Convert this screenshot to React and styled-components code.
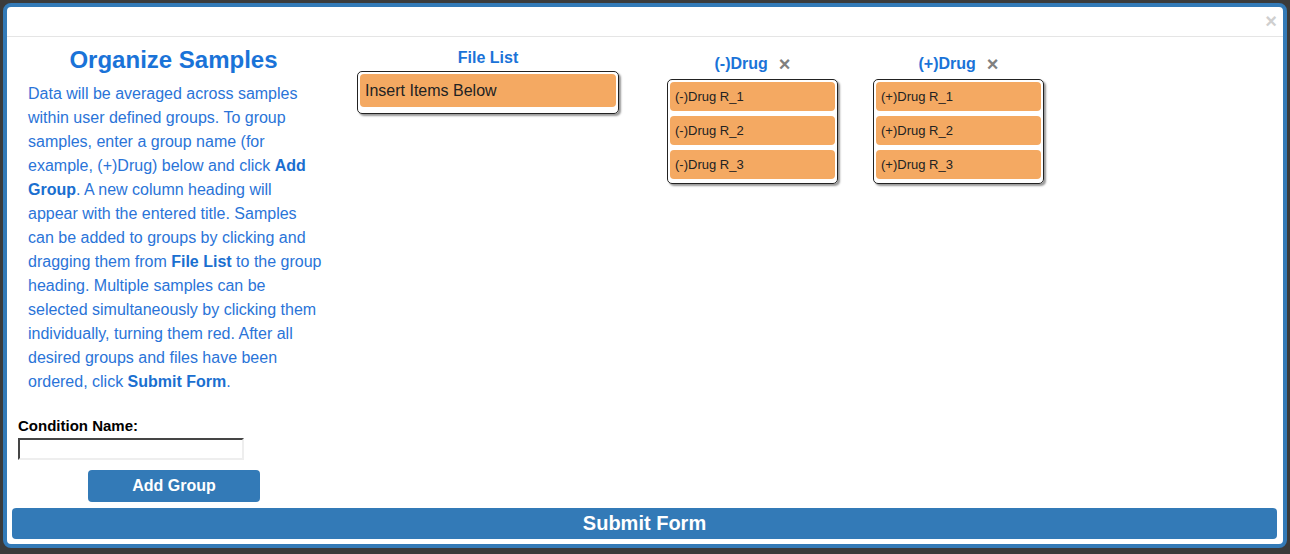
import React from "react";
import styled, { createGlobalStyle } from "styled-components";

const Global = createGlobalStyle`
  html, body {
    margin: 0;
    padding: 0;
    background: #3b3b3b;
    font-family: "Liberation Sans", Arial, sans-serif;
  }
`;

const Page = styled.div`
  padding: 3px 3px 6px 3px;
  height: 554px;
  box-sizing: border-box;
`;

const Modal = styled.div`
  height: 100%;
  box-sizing: border-box;
  border: 4px solid #337ab7;
  border-radius: 8px;
  background: #fff;
  display: flex;
  flex-direction: column;
`;

const Header = styled.div`
  height: 29px;
  border-bottom: 1px solid #e5e5e5;
  display: flex;
  justify-content: flex-end;
  align-items: center;
  padding-right: 6px;
`;

const Close = styled.span`
  font-size: 20px;
  font-weight: bold;
  line-height: 1;
  color: ${(p) => p.$color || "#cfcfcf"};
  cursor: pointer;
  margin-top: ${(p) => (p.$top ? "-2px" : "0")};
`;

const Main = styled.div`
  display: flex;
  align-items: flex-start;
`;

const Side = styled.div`
  width: 333px;
  display: flex;
  flex-direction: column;
  padding-top: 10px;
`;

const Title = styled.h2`
  margin: 0;
  font-size: 24px;
  line-height: 26px;
  font-weight: bold;
  color: #1a73d8;
  text-align: center;
`;

const Help = styled.p`
  margin: 9px 0 0 21px;
  width: 295px;
  font-size: 16px;
  line-height: 24px;
  color: #2a74d8;
  b {
    color: #1a6fd0;
  }
`;

const Label = styled.label`
  margin: 24px 0 0 11px;
  font-size: 15px;
  line-height: 16px;
  font-weight: bold;
  color: #000;
`;

const Input = styled.input`
  margin: 4px 0 0 11px;
  width: 226px;
  height: 22px;
  box-sizing: border-box;
  border: 2px inset #eee;
  border-top-color: #999;
  border-left-color: #999;
  padding: 0 3px;
`;

const Button = styled.button`
  background: #337ab7;
  color: #fff;
  border: none;
  border-radius: 4px;
  font-family: inherit;
  font-weight: bold;
  cursor: pointer;
`;

const AddButton = styled(Button)`
  margin: 10px 0 0 81px;
  width: 172px;
  height: 32px;
  font-size: 16px;
`;

const SubmitButton = styled(Button)`
  margin: 6px 6px 0 5px;
  height: 31px;
  font-size: 20px;
`;

const Column = styled.div`
  width: ${(p) => p.$width}px;
  margin-left: ${(p) => p.$gap}px;
  padding-top: ${(p) => p.$top}px;
  display: flex;
  flex-direction: column;
`;

const ColHead = styled.div`
  display: flex;
  justify-content: center;
  align-items: center;
  gap: 11px;
  height: 18px;
  margin-bottom: ${(p) => p.$gap}px;
`;

const ColTitle = styled.span`
  font-size: 16px;
  font-weight: bold;
  color: #1a73d8;
`;

const List = styled.div`
  border: 1px solid #222;
  border-radius: 5px;
  box-shadow: 2px 2px 2px #999;
  padding: 2px 2px ${(p) => p.$bottom}px 2px;
  display: flex;
  flex-direction: column;
  gap: 5px;
`;

const Item = styled.div`
  background: #f4a962;
  border-radius: 4px;
  height: ${(p) => (p.$big ? 33 : 29)}px;
  display: flex;
  align-items: center;
  padding-left: 5px;
  font-size: ${(p) => (p.$big ? 16 : 13)}px;
  color: #222;
  cursor: move;
`;

const groups = [
  { name: "(-)Drug", gap: 48, items: ["(-)Drug R_1", "(-)Drug R_2", "(-)Drug R_3"] },
  { name: "(+)Drug", gap: 35, items: ["(+)Drug R_1", "(+)Drug R_2", "(+)Drug R_3"] },
];

export default function App() {
  return (
    <Page>
      <Global />
      <Modal>
        <Header>
          <Close $top>×</Close>
        </Header>
        <Main>
          <Side>
            <Title>Organize Samples</Title>
            <Help>
              Data will be averaged across samples within user defined groups.
              To group samples, enter a group name (for example, (+)Drug) below
              and click <b>Add Group</b>. A new column heading will appear with
              the entered title. Samples can be added to groups by clicking and
              dragging them from <b>File List</b> to the group heading. Multiple
              samples can be selected simultaneously by clicking them
              individually, turning them red. After all desired groups and files
              have been ordered, click <b>Submit Form</b>.
            </Help>
            <Label htmlFor="cond">Condition Name:</Label>
            <Input id="cond" type="text" />
            <AddButton>Add Group</AddButton>
          </Side>
          <Column $width={262} $gap={17} $top={12}>
            <ColHead $gap={4}>
              <ColTitle>File List</ColTitle>
            </ColHead>
            <List $bottom={6}>
              <Item $big>Insert Items Below</Item>
            </List>
          </Column>
          {groups.map((g) => (
            <Column key={g.name} $width={171} $gap={g.gap} $top={18}>
              <ColHead $gap={6}>
                <ColTitle>{g.name}</ColTitle>
                <Close $color="#808080">×</Close>
              </ColHead>
              <List $bottom={4}>
                {g.items.map((it) => (
                  <Item key={it}>{it}</Item>
                ))}
              </List>
            </Column>
          ))}
        </Main>
        <SubmitButton>Submit Form</SubmitButton>
      </Modal>
    </Page>
  );
}
